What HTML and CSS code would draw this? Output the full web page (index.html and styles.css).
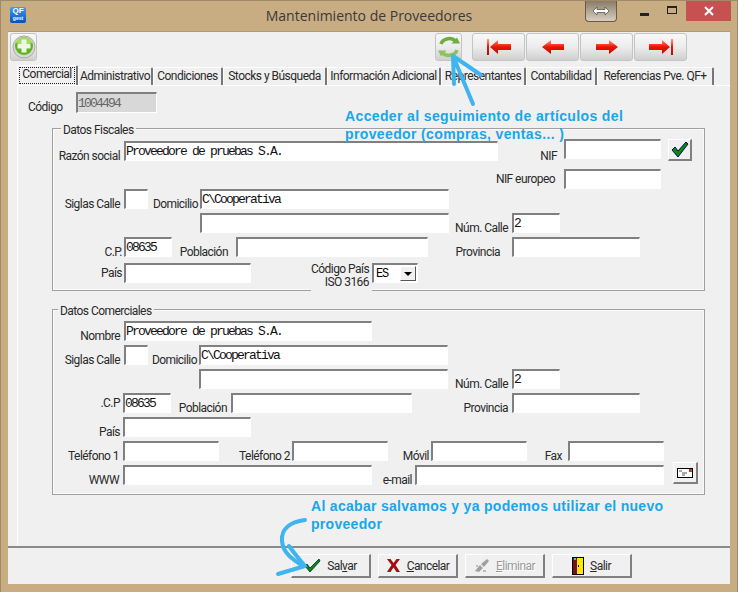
FILE: index.html
```html
<!DOCTYPE html>
<html lang="es">
<head>
<meta charset="utf-8">
<title>Mantenimiento de Proveedores</title>
<link rel="stylesheet" href="styles.css">
</head>
<body>
<div class="window">
  <header class="titlebar">
    <div class="tb-left">
      <div class="appicon"><span class="qf">QF</span><span class="gest">gest</span></div>
    </div>
    <div class="title">Mantenimiento de Proveedores</div>
    <div class="tb-right">
      <div class="snap"><svg width="18" height="10" viewBox="0 0 18 10"><path d="M1 5l4-4v2.500h8V1l4 4-4 4V6.500H5V9z" fill="#fff" stroke="#555" stroke-width=".8"/></svg></div>
      <div class="winbtn minb"><span class="min-glyph"></span></div>
      <div class="winbtn maxb"><span class="max-glyph"></span></div>
      <div class="winbtn closeb"><svg width="10" height="10" viewBox="0 0 10 10"><path d="M1 1l8 8M9 1L1 9" stroke="#fff" stroke-width="2"/></svg></div>
    </div>
  </header>

  <main class="client">
    <div class="toolbar">
      <button class="tool tool-add">
        <svg width="24" height="24" viewBox="0 0 24 24"><circle cx="12" cy="12" r="11" fill="#d8d8d8" stroke="#aaa"/><circle cx="12" cy="11" r="9" fill="#5fb41e"/><path d="M3.500 8a9 9 0 0 1 17 0z" fill="#a6dc64"/><path d="M9.500 4.500h5v4h4v5h-4v4h-5v-4h-4v-5h4z" fill="#eef6e4"/></svg>
      </button>
      <button class="tool tool-refresh">
        <svg width="24" height="24" viewBox="0 0 24 24"><path d="M4 9a8.500 7 0 0 1 14-3.500" fill="none" stroke="#6fae3a" stroke-width="3.500"/><path d="M14.500 8.500h8.500l-3-6z" fill="#6fae3a"/><path d="M20 15a8.500 7 0 0 1-14 3.500" fill="none" stroke="#8cc45a" stroke-width="3.500"/><path d="M9.500 15.500H1l3 6z" fill="#8cc45a"/></svg>
      </button>
      <div class="navs">
        <button class="tool tool-nav"><svg width="26" height="18" viewBox="0 0 26 18"><defs><linearGradient id="r1" x1="0" y1="0" x2="0" y2="1"><stop offset="0" stop-color="#ff9a80"/><stop offset=".5" stop-color="#f01000"/><stop offset="1" stop-color="#b01000"/></linearGradient></defs><path d="M1 1h2v16H1zM4 9l8-7v4h13v6H12v4z" fill="url(#r1)"/></svg></button>
        <button class="tool tool-nav"><svg width="24" height="18" viewBox="0 0 24 18"><path d="M1 9l9-7v4h13v6H10v4z" fill="url(#r1)"/></svg></button>
        <button class="tool tool-nav"><svg width="24" height="18" viewBox="0 0 24 18"><path d="M23 9l-9-7v4H1v6h13v4z" fill="url(#r1)"/></svg></button>
        <button class="tool tool-nav"><svg width="26" height="18" viewBox="0 0 26 18"><path d="M25 1h-2v16h2zM22 9l-8-7v4H1v6h13v4z" fill="url(#r1)"/></svg></button>
      </div>
    </div>

    <nav class="tabs">
      <div class="tab active"><span class="focus">Comercial</span></div>
      <div class="tab">Administrativo</div>
      <div class="tab">Condiciones</div>
      <div class="tab">Stocks y Búsqueda</div>
      <div class="tab">Información Adicional</div>
      <div class="tab">Representantes</div>
      <div class="tab">Contabilidad</div>
      <div class="tab">Referencias Pve. QF+</div>
    </nav>

    <section class="panel">
      <div class="row r-codigo">
        <label class="lbl">Código</label>
        <input class="field disabled" value="1004494" readonly>
      </div>

      <div class="group g-fiscal">
        <span class="legend l-fiscal">Datos Fiscales</span>
        <div class="row f1">
          <label class="lbl p4">Razón social</label>
          <input class="field" value="Proveedore de pruebas S.A.">
          <label class="lbl p7">NIF</label>
          <input class="field top" value="">
          <button class="mini check"><svg width="20" height="17" viewBox="0 0 20 17"><path d="M2 9l3-3 3 4 8-9 2 2-10 13z" fill="#0a8a0a" stroke="#06066a" stroke-width="1"/></svg></button>
        </div>
        <div class="row f2">
          <label class="lbl mid p9">NIF europeo</label>
          <input class="field" value="">
        </div>
        <div class="row f3">
          <label class="lbl p4">Siglas Calle</label>
          <input class="field" value="">
          <label class="lbl p2">Domicilio</label>
          <input class="field" value="C\Cooperativa">
        </div>
        <div class="row f4">
          <span></span>
          <input class="field" value="">
          <label class="lbl p4">Núm. Calle</label>
          <input class="field" value="2">
        </div>
        <div class="row f5">
          <label class="lbl p2">C.P.</label>
          <input class="field" value="08635">
          <label class="lbl p8">Población</label>
          <input class="field" value="">
          <label class="lbl p12">Provincia</label>
          <input class="field" value="">
        </div>
        <div class="row f6">
          <label class="lbl mid p2">País</label>
          <input class="field" value="">
          <label class="lbl iso">Código País<br>ISO 3166</label>
          <div class="select"><span>ES</span><span class="arrow"><i></i></span></div>
        </div>
      </div>

      <div class="group g-comercial">
        <span class="legend l-comercial">Datos Comerciales</span>
        <div class="row c1">
          <label class="lbl p4">Nombre</label>
          <input class="field" value="Proveedore de pruebas S.A.">
        </div>
        <div class="row c2">
          <label class="lbl p4">Siglas Calle</label>
          <input class="field" value="">
          <label class="lbl p2">Domicilio</label>
          <input class="field" value="C\Cooperativa">
        </div>
        <div class="row c3">
          <span></span>
          <input class="field" value="">
          <label class="lbl p4">Núm. Calle</label>
          <input class="field" value="2">
        </div>
        <div class="row c4">
          <label class="lbl mid p3">.C.P</label>
          <input class="field" value="08635">
          <label class="lbl p4">Población</label>
          <input class="field" value="">
          <label class="lbl p4">Provincia</label>
          <input class="field" value="">
        </div>
        <div class="row c5">
          <label class="lbl p3">País</label>
          <input class="field" value="">
        </div>
        <div class="row c6">
          <label class="lbl p4">Teléfono 1</label>
          <input class="field" value="">
          <label class="lbl p2">Teléfono 2</label>
          <input class="field" value="">
          <label class="lbl p2">Móvil</label>
          <input class="field" value="">
          <label class="lbl p6">Fax</label>
          <input class="field" value="">
        </div>
        <div class="row c7">
          <label class="lbl p4">WWW</label>
          <input class="field" value="">
          <label class="lbl p3">e-mail</label>
          <input class="field" value="">
          <button class="mini mail"><svg width="16" height="10" viewBox="0 0 16 10"><rect x=".5" y=".5" width="15" height="9" fill="#fff" stroke="#000"/><rect x="12" y="1" width="3" height="3" fill="#d22"/><rect x="14" y="2" width="1" height="2" fill="#292"/><path d="M2 3h3M5 5h5M5 7h3" stroke="#555"/></svg></button>
        </div>
      </div>
    </section>

    <footer class="footer">
      <button class="action"><svg width="17" height="15" viewBox="0 0 17 15"><path d="M1 8l2-2 3 4 9-9 1 2-10 11z" fill="#0a8a0a" stroke="#04243a" stroke-width=".8"/></svg><span>Sal<u>v</u>ar</span></button>
      <button class="action"><svg width="15" height="15" viewBox="0 0 15 15"><path d="M1 1h3.500l3 4 3-4H14l-4.500 6 4.500 7h-3.500l-3-4.500-3 4.500H1l4.500-7z" fill="#a01010"/></svg><span><u>C</u>ancelar</span></button>
      <button class="action off"><svg width="16" height="15" viewBox="0 0 16 15"><path d="M1 13l5-6 3 3-4 4zM7 6l6-5 2 2-5 6z" fill="#a0a0a0"/><path d="M2 8h2M9 13h3" stroke="#888"/></svg><span><u>E</u>liminar</span></button>
      <button class="action"><svg width="12" height="18" viewBox="0 0 12 18"><rect width="12" height="18" fill="#000"/><rect x="1" y="1" width="4" height="16" fill="#7a1010"/><rect x="5" y="1" width="6" height="16" fill="#ffe800"/><rect x="6" y="8" width="1" height="2" fill="#000"/><rect x="2" y="1" width="2" height="2" fill="#3cc"/></svg><span><u>S</u>alir</span></button>
    </footer>
  </main>

  <p class="note note-top">Acceder al seguimiento de artículos del<br>proveedor (compras, ventas... )</p>
  <p class="note note-bottom">Al acabar salvamos y ya podemos utilizar el nuevo<br>proveedor</p>
  <svg class="scribble" width="738" height="592" viewBox="0 0 738 592">
    <g fill="none" stroke="#3fb4ee" stroke-width="4" stroke-linecap="round" stroke-linejoin="round">
      <path d="M453 55L481 74M453 55L473 103M453 55L454 83"/>
      <path d="M305 519C290 521 281 528 282 540C283 552 292 558 303 565"/>
      <path d="M289 545C294 552 299 558 305 565L278 573"/>
    </g>
  </svg>
</div>
</body>
</html>
```
FILE: styles.css
```css
* { box-sizing: border-box; }
html, body { margin: 0; padding: 0; }
body { width: 738px; height: 592px; overflow: hidden; background: #c8ac82; }

.window {
  position: relative;
  width: 738px;
  height: 592px;
  display: flex;
  flex-direction: column;
  background: #c8ac82;
  border: 1px solid #a08a68;
  border-bottom: 0;
  font: 12px/14px Roboto, "Liberation Sans", Arial, sans-serif;
  letter-spacing: -.55px;
  color: #2a2a2a;
}

/* title bar */
.titlebar {
  height: 30px;
  display: grid;
  grid-template-columns: 1fr auto 1fr;
  align-items: start;
}
.tb-left { padding: 6px 0 0 9px; }
.appicon {
  width: 16px; height: 16px;
  background: linear-gradient(#3f9cf4, #0a4fb8);
  border-radius: 2px;
  color: #fff;
  display: flex;
  flex-direction: column;
  align-items: center;
  font: bold 8px/8px "Liberation Sans", sans-serif;
  letter-spacing: 0;
}
.gest { font-size: 5px; line-height: 6px; }
.title {
  font: 14px/30px "Open Sans", sans-serif;
  letter-spacing: 0;
  color: #3a3a3a;
}
.tb-right { display: flex; justify-content: flex-end; padding-right: 6px; }
.snap {
  width: 32px; height: 21px;
  margin-right: 13px;
  background: linear-gradient(#8a7c66, #d8cfc0);
  border: 1px solid #6a5a44;
  border-top: 0;
  border-radius: 0 0 4px 4px;
  display: flex; align-items: center; justify-content: center;
}
.winbtn { height: 20px; display: flex; align-items: center; justify-content: center; }
.minb { width: 28px; }
.maxb { width: 28px; padding-bottom: 2px; }
.closeb { width: 45px; background: #c75050; }
.min-glyph { width: 9px; height: 3px; background: #222; margin-top: 6px; }
.max-glyph { width: 10px; height: 8px; border: 1px solid #222; border-top-width: 2px; }

/* client */
.client {
  width: 722px;
  height: 553px;
  margin-left: 7px;
  background: #f0f0f0;
  display: flex;
  flex-direction: column;
  border-top: 1px solid #b09a78;
}
.toolbar { height: 33px; display: flex; align-items: flex-start; padding: 1px 0 0 2px; }
.tool {
  height: 28px;
  padding: 0;
  border: 1px solid #c4c4c4;
  border-radius: 3px;
  background: linear-gradient(#f8f8f8 0, #ececec 50%, #cfcfcf 100%);
  display: flex; align-items: center; justify-content: center;
}
.tool-add, .tool-refresh { width: 27px; }
.tool-refresh { margin-left: 398px; }
.navs { display: flex; gap: 1px; margin-left: 10px; }
.tool-nav { width: 53px; }

/* tabs */
.tabs {
  height: 20px;
  margin-left: 9px;
  display: grid;
  grid-template-columns: 61px 75px 70px 104px 114px 85px 71px 117px;
  justify-content: start;
  letter-spacing: -.52px;
}
.tab {
  margin-top: 2px;
  border-top: 1px solid #fff;
  border-left: 1px solid #fff;
  border-right: 2px solid #777;
  border-radius: 2px 2px 0 0;
  text-align: center;
  line-height: 17px;
  white-space: nowrap;
}
.tab.active { margin-top: 0; padding: 1px 1px 0 1px; }
.focus { display: block; border: 1px dotted #222; height: 17px; line-height: 13px; }

/* panel */
.panel {
  height: 461px;
  margin-left: 9px;
  border-top: 1px solid #fff;
  border-left: 1px solid #fff;
  display: flex;
  flex-direction: column;
}
.row { display: grid; height: 20px; grid-template-rows: 100%; }
.lbl {
  align-self: end;
  margin-bottom: -2px;
  text-align: right;
  white-space: nowrap;
}
.lbl.mid { align-self: center; margin-bottom: 0; }
.p2 { padding-right: 2px; }
.p3 { padding-right: 3px; }
.p4 { padding-right: 4px; }
.p6 { padding-right: 6px; }
.p7 { padding-right: 7px; }
.p8 { padding-right: 8px; }
.p9 { padding-right: 9px; }
.p12 { padding-right: 12px; }

.field {
  display: block;
  width: 100%;
  height: 20px;
  align-self: end;
  margin: 0;
  padding: 0;
  border-style: solid;
  border-width: 2px 1px 1px 2px;
  border-color: #808080 #fff #fff #808080;
  border-radius: 0;
  outline: 0;
  background: #fff;
  color: #111;
  font: 13px/15px "Liberation Mono", monospace;
  letter-spacing: -1.8px;
}
.field.top { align-self: start; }
.field.disabled { height: 21px; background: #d8d8d8; color: #666; }

.r-codigo { height: 21px; margin-top: 6px; grid-template-columns: 58px 81px; width: 139px; }
.r-codigo .lbl { text-align: left; padding-left: 10px; margin-bottom: -1px; }

.group {
  position: relative;
  width: 653px;
  margin-left: 34px;
  border: 1px solid #a0a0a0;
  box-shadow: 0 0 0 1px #fafafa inset;
}
.legend { position: absolute; top: -6px; background: #f0f0f0; padding: 0 2px; }
.l-fiscal { left: 8px; }
.l-comercial { left: 5px; }

.g-fiscal { margin-top: 15px; height: 163px; padding-top: 10px; }
.g-comercial { margin-top: 18px; height: 186px; padding-top: 11px; }

.f1 { height: 22px; grid-template-columns: 71px 374px 66px 97px 31px; }
.f2 { margin-top: 8px; grid-template-columns: 511px 97px; }
.f3 { grid-template-columns: 71px 24px 52px 249px; }
.f4 { margin-top: 4px; grid-template-columns: 147px 249px 63px 48px; }
.f5 { margin-top: 4px; grid-template-columns: 71px 48px 64px 192px 84px 128px; }
.f6 { margin-top: 6px; grid-template-columns: 71px 127px 121px 46px; }

.c1 { grid-template-columns: 71px 248px; }
.c2 { margin-top: 4px; grid-template-columns: 71px 24px 51px 249px; }
.c3 { margin-top: 4px; grid-template-columns: 146px 249px 64px 48px; }
.c4 { margin-top: 4px; grid-template-columns: 70px 48px 60px 181px 100px 128px; }
.c5 { margin-top: 4px; grid-template-columns: 70px 128px; }
.c6 { margin-top: 4px; grid-template-columns: 70px 96px 73px 96px 43px 96px 41px 96px; }
.c7 { margin-top: 4px; grid-template-columns: 70px 249px 43px 249px 34px; }

.iso {
  justify-self: end;
  align-self: start;
  width: 61px;
  height: 28px;
  margin: 0;
  padding: 0 3px 0 0;
  line-height: 13px;
  background: #f0f0f0;
}

.select {
  display: flex;
  align-items: center;
  justify-content: space-between;
  height: 20px;
  padding: 0 1px 0 2px;
  border-style: solid;
  border-width: 2px 1px 1px 2px;
  border-color: #808080 #fff #fff #808080;
  background: #fff;
  font: 12px/14px "Liberation Mono", monospace;
  letter-spacing: -1.2px;
  color: #000;
}
.arrow {
  width: 16px; height: 15px;
  background: #f0f0f0;
  border: 1px solid;
  border-color: #fff #555 #555 #fff;
  display: flex; align-items: center; justify-content: center;
}
.arrow i { border: 4px solid transparent; border-top: 4px solid #000; border-bottom: 0; }

.mini {
  padding: 0;
  background: #f0f0f0;
  border-style: solid;
  border-width: 1px 2px 2px 1px;
  border-color: #fff #808080 #808080 #fff;
  display: flex; align-items: center; justify-content: center;
}
.check { width: 24px; height: 22px; justify-self: end; }
.mail { width: 25px; height: 22px; justify-self: end; margin-top: -3px; }

/* footer */
.footer {
  height: 38px;
  margin-top: auto;
  border-top: 2px solid #8a8a8a;
  display: flex;
  gap: 7px;
  padding: 6px 0 0 283px;
}
.action {
  width: 80px;
  height: 24px;
  padding: 0;
  display: flex;
  align-items: center;
  justify-content: center;
  gap: 6px;
  background: #f0f0f0;
  border-style: solid;
  border-width: 1px 2px 2px 1px;
  border-color: #fff #808080 #808080 #fff;
  font: inherit;
  letter-spacing: inherit;
  color: #2a2a2a;
}
.action.off { color: #9a9a9a; text-shadow: 1px 1px 0 #fff; }

/* annotations drawn over the form */
.note {
  position: absolute;
  margin: 0;
  font: bold 14px/18px "Liberation Sans", sans-serif;
  letter-spacing: .37px;
  color: #18a6ec;
  white-space: nowrap;
}
.note-top { left: 344px; top: 106px; }
.note-bottom { left: 310px; top: 496px; letter-spacing: .3px; }
.scribble { position: absolute; left: -1px; top: 0; pointer-events: none; }
```
